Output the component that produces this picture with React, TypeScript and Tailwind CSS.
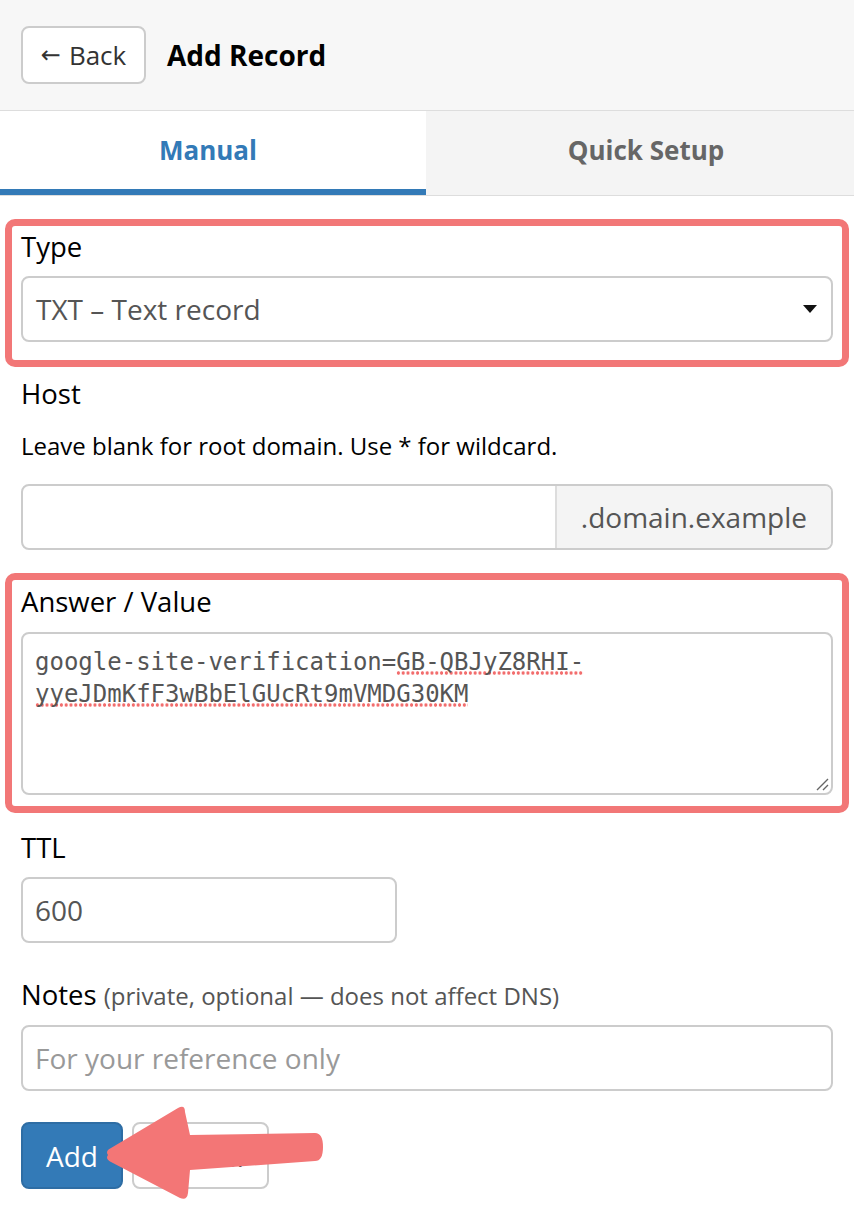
const inputCls =
    'block w-full h-[66px] rounded-[8px] border-2 border-[#ccc] bg-white px-[12px] text-[28px] text-[#555] outline-none placeholder:text-[#999]';

const labelCls = 'block text-[27.5px] leading-[36px] text-black';

// spellcheck squiggle under a word
const squiggle =
    'bg-[radial-gradient(circle,#f26d6d_1.4px,transparent_2px)] bg-[length:4.8px_4px] bg-repeat-x bg-[position:0_23px]';

function Highlight({ className, children }: { className: string; children: React.ReactNode }) {
    return <div className={`-mx-[16px] rounded-[10px] border-[7px] border-[#f27777] px-[9px] ${className}`}>{children}</div>;
}

function PointerArrow() {
    return (
        <svg className="pointer-events-none absolute left-[60px] top-[-20px]" width="260" height="110" viewBox="0 0 260 110">
            <path
                d="M27 53 Q24 49 30 46 L97 6 Q104 2 104 10 L109 33 L234 31 Q242 31 242 45 Q242 59 234 59 L109 68 L107 91 Q106 99 99 96 L30 60 Q24 57 27 53 Z"
                fill="#f37676"
            />
        </svg>
    );
}

export default function App() {
    return (
        <div className="min-h-[1216px] w-[854px] bg-white font-['Open_Sans',sans-serif] text-black">
            <header className="flex h-[111px] items-center gap-[21px] border-b border-[#ddd] bg-[#f7f7f7] px-[21px]">
                <button className="flex h-[58px] w-[125px] items-center justify-center gap-[8px] rounded-[8px] border-2 border-[#ccc] bg-white text-[26px] text-[#333]">
                    <span className="font-['DejaVu_Sans',sans-serif] text-[24px] leading-none">←</span>
                    <span>Back</span>
                </button>
                <h1 className="text-[28px] font-bold">Add Record</h1>
            </header>

            <nav className="flex h-[85px] border-b border-[#ddd]">
                <div className="flex flex-1 items-center justify-center border-b-[6px] border-[#337ab7] bg-white pr-[10px] text-[26px] font-bold text-[#337ab7]">
                    Manual
                </div>
                <div className="flex flex-1 items-center justify-center bg-[#f4f4f4] pb-[6px] pl-[12px] text-[26px] font-bold text-[#666]">
                    Quick Setup
                </div>
            </nav>

            <form className="px-[21px] pt-[23px]">
                <Highlight className="pt-[3px] pb-[18px]">
                    <label className={labelCls}>Type</label>
                    <div className="mt-[11px] flex h-[66px] items-center justify-between rounded-[8px] border-2 border-[#ccc] bg-white pl-[13px] pr-[14px] text-[28px] text-[#555]">
                        <span>TXT – Text record</span>
                        <svg width="14" height="8" viewBox="0 0 14 8">
                            <path d="M0 0 H14 L7 8 Z" fill="#111" />
                        </svg>
                    </div>
                </Highlight>

                <label className={`${labelCls} mt-[9px]`}>Host</label>
                <p className="mt-[18px] text-[24px] leading-[32px]">Leave blank for root domain. Use * for wildcard.</p>
                <div className="mt-[22px] flex h-[66px] rounded-[8px] border-2 border-[#ccc]">
                    <input className="min-w-0 flex-1 rounded-l-[8px] px-[12px] text-[28px] outline-none" />
                    <span className="flex items-center rounded-r-[6px] border-l-2 border-[#ddd] bg-[#f4f4f4] px-[24px] text-[28px] text-[#555]">
                        .domain.example
                    </span>
                </div>

                <Highlight className="mt-[23px] pt-[4px] pb-[11px]">
                    <label className={labelCls}>Answer / Value</label>
                    <div className="relative mt-[12px] h-[163px] rounded-[8px] border-2 border-[#ccc] bg-white px-[12px] pt-[12px] font-['DejaVu_Sans_Mono',monospace] text-[24px] leading-[32px] text-[#555]">
                        <div>
                            google-site-verification=<span className={squiggle}>GB-QBJyZ8RHI-</span>
                        </div>
                        <div>
                            <span className={squiggle}>yyeJDmKfF3wBbElGUcRt9mVMDG30KM</span>
                        </div>
                        <svg className="absolute right-[2px] bottom-[2px]" width="14" height="14" viewBox="0 0 14 14">
                            <path d="M13 2 L2 13 M13 8 L8 13" stroke="#666" strokeWidth="1.4" />
                        </svg>
                    </div>
                </Highlight>

                <label className={`${labelCls} mt-[17px]`}>TTL</label>
                <input className={`${inputCls} mt-[11px] !w-[376px]`} defaultValue="600" />

                <label className={`${labelCls} mt-[34px]`}>
                    Notes <span className="text-[24px] text-[#555]">(private, optional — does not affect DNS)</span>
                </label>
                <input className={`${inputCls} mt-[11px]`} placeholder="For your reference only" />

                <div className="relative mt-[31px] flex gap-[9px]">
                    <button type="button" className="h-[67px] w-[102px] rounded-[8px] border-2 border-[#2e6da4] bg-[#337ab7] text-[28px] text-white">
                        Add
                    </button>
                    <button type="button" className="h-[67px] w-[137px] rounded-[8px] border-2 border-[#ccc] bg-white text-[28px] text-[#333]">
                        Cancel
                    </button>
                    <PointerArrow />
                </div>
            </form>
        </div>
    );
}
